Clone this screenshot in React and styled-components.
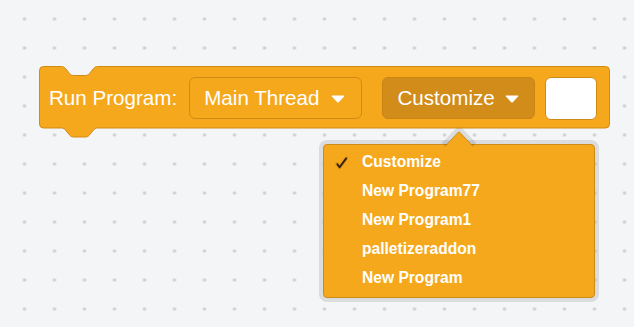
import styled, { createGlobalStyle } from 'styled-components';

const GlobalStyle = createGlobalStyle`
  html, body {
    margin: 0;
    padding: 0;
  }
  body {
    font-family: "Liberation Sans", Arial, Helvetica, sans-serif;
  }
`;

const ORANGE = '#f5a81c';
const DARK = '#cf8b17';

const programs = ['Customize', 'New Program77', 'New Program1', 'palletizeraddon', 'New Program'];

function Caret() {
  return (
    <svg width="14" height="8" viewBox="0 0 14 8">
      <path d="M1.2 0.5 H12.8 Q13.8 0.5 13.1 1.4 L7.8 7.2 Q7 8 6.2 7.2 L0.9 1.4 Q0.2 0.5 1.2 0.5 Z" fill="#fff" />
    </svg>
  );
}

function Check() {
  return (
    <svg width="14" height="14" viewBox="0 0 14 14">
      <path d="M2 8 L4.5 11.5 L11.5 2" fill="none" stroke="#c8801a" strokeWidth="3.4" strokeLinecap="round" strokeLinejoin="round" opacity="0.6" />
      <path d="M2.4 8.3 L4.6 11.3 L11.2 2.4" fill="none" stroke="#2e220c" strokeWidth="1.8" strokeLinecap="round" strokeLinejoin="round" />
    </svg>
  );
}

function BlockShape() {
  const d = `M0 4 A4 4 0 0 1 4 0 H22 c2 0 3 1 4 2 l4 5 c1 1 2 2 4 2 h12 c2 0 3 -1 4 -2 l4 -5 c1 -1 2 -2 4 -2
    H566 a4 4 0 0 1 4 4 V57.5 a4 4 0 0 1 -4 4 H58 c-2 0 -3 1 -4 2 l-4 5 c-1 1 -2 2 -4 2 h-12
    c-2 0 -3 -1 -4 -2 l-4 -5 c-1 -1 -2 -2 -4 -2 H4 a4 4 0 0 1 -4 -4 Z`;
  return (
    <ShapeSvg width="571" height="72" viewBox="-0.5 -0.5 571 72">
      <path d={d} fill={ORANGE} stroke={DARK} strokeWidth="1" />
    </ShapeSvg>
  );
}

export default function App() {
  return (
    <>
      <GlobalStyle />
      <Workspace>
        <Block>
          <BlockShape />
          <Label>Run Program:</Label>
          <Field>
            Main Thread
            <Caret />
          </Field>
          <Field $open>
            Customize
            <Caret />
          </Field>
          <TextInput />
        </Block>

        <Menu>
          <MenuArrow width="36" height="20" viewBox="0 0 36 20">
            <path d="M4 19 L17 5.5 Q18 4.5 19 5.5 L32 19" fill="none" stroke="rgba(0,0,0,0.1)" strokeWidth="9" strokeLinejoin="round" />
            <path d="M4 20 L17 5.5 Q18 4.5 19 5.5 L32 20 Z" fill={ORANGE} />
            <path d="M4 19.5 L17 5.5 Q18 4.5 19 5.5 L32 19.5" fill="none" stroke={DARK} strokeWidth="1" />
          </MenuArrow>
          {programs.map((p, i) => (
            <MenuItem key={p}>
              <CheckSlot>{i === 0 ? <Check /> : null}</CheckSlot>
              {p}
            </MenuItem>
          ))}
        </Menu>
      </Workspace>
    </>
  );
}

const Workspace = styled.div`
  position: relative;
  width: 100vw;
  height: 100vh;
  overflow: hidden;
  background-color: #f4f5f7;
  background-image: radial-gradient(circle at 15px 14.5px, #cfcfcf 1.4px, transparent 2px);
  background-size: 30px 29px;
  background-position: 9.5px 4.5px;
`;

const Block = styled.div`
  position: absolute;
  left: 39px;
  top: 66px;
  width: 570px;
  height: 62px;
  box-sizing: border-box;
  padding: 2px 11px 0 10px;
  display: flex;
  align-items: center;
  color: #fff;
  font-size: 20.6px;
`;

const ShapeSvg = styled.svg`
  position: absolute;
  left: -0.5px;
  top: -0.5px;
  z-index: 0;
`;

const Label = styled.span`
  position: relative;
  margin-right: 12px;
  white-space: nowrap;
  flex-shrink: 0;
`;

const Field = styled.div`
  position: relative;
  flex-shrink: 0;
  height: 42px;
  box-sizing: border-box;
  display: flex;
  align-items: center;
  gap: 12px;
  padding: 0 16px 0 14px;
  margin-right: ${p => (p.$open ? '10px' : '20px')};
  border: 1px solid ${p => (p.$open ? '#c88515' : DARK)};
  border-radius: 6px;
  background: ${p => (p.$open ? '#d18c1a' : 'transparent')};
  white-space: nowrap;
  ${p => p.$open && 'padding-right: 15px; gap: 10px;'}

  svg {
    margin-top: 1px;
  }
`;

const TextInput = styled.div`
  position: relative;
  flex-shrink: 0;
  width: 52px;
  height: 43px;
  box-sizing: border-box;
  background: #fff;
  border: 1px solid ${DARK};
  border-radius: 6px;
`;

const Menu = styled.div`
  position: absolute;
  left: 323px;
  top: 144px;
  width: 272px;
  height: 154px;
  box-sizing: border-box;
  padding: 2px 0 6px;
  background: ${ORANGE};
  border: 1px solid ${DARK};
  border-radius: 4px;
  box-shadow: 0 0 0 4px rgba(0, 0, 0, 0.1);
  color: #fff;
  font-size: 15.6px;
  font-weight: bold;
`;

const MenuArrow = styled.svg`
  position: absolute;
  left: 117px;
  top: -18px;
`;

const MenuItem = styled.div`
  display: flex;
  align-items: center;
  height: 29px;
  line-height: 29px;
  white-space: nowrap;
`;

const CheckSlot = styled.span`
  width: 38px;
  display: flex;
  justify-content: flex-end;
  padding-right: 13px;
  box-sizing: border-box;
  flex-shrink: 0;

  svg {
    margin-top: 2px;
  }
`;
